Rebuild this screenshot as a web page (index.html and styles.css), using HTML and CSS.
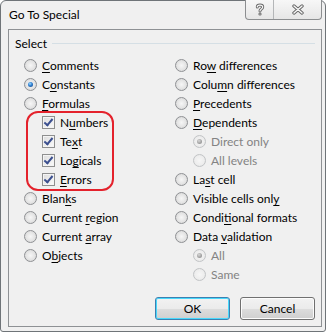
FILE: index.html
```html
<!DOCTYPE html>
<html lang="en">

<head>
  <meta charset="UTF-8">
  <title>Go To Special</title>
  <link rel="stylesheet" href="styles.css">
</head>

<body>
  <div class="window">
    <div class="titlebar">
      <span class="title">Go To Special</span>
      <div class="caption-buttons">
        <span class="cap-btn help">
          <svg width="10" height="13" viewBox="0 0 10 13">
            <path d="M2.3 4 C2.3 1.4 7.7 1.4 7.7 4 C7.7 6 5 6 5 8" fill="none" stroke="#6a6a6a" stroke-width="3" stroke-linecap="round"/>
            <circle cx="5" cy="11" r="1.6" fill="#6a6a6a"/>
            <path d="M2.3 4 C2.3 1.4 7.7 1.4 7.7 4 C7.7 6 5 6 5 8" fill="none" stroke="#f7f7f7" stroke-width="1.2" stroke-linecap="round"/>
            <circle cx="5" cy="11" r="0.6" fill="#f7f7f7"/>
          </svg>
        </span>
        <span class="cap-btn close">
          <svg width="14" height="11" viewBox="0 0 14 11">
            <path d="M3 2 L11 9 M11 2 L3 9" fill="none" stroke="#6a6a6a" stroke-width="3.4" stroke-linecap="round"/>
            <path d="M3 2 L11 9 M11 2 L3 9" fill="none" stroke="#f7f7f7" stroke-width="1.4" stroke-linecap="round"/>
          </svg>
        </span>
      </div>
    </div>

    <div class="panel">
      <div class="group-head">
        <span class="group-label">Select</span>
        <span class="rule"></span>
      </div>

      <div class="columns">
        <div class="col">
          <div class="opt"><span class="radio"></span><span><u>C</u>omments</span></div>
          <div class="opt"><span class="radio checked"></span><span>C<u>o</u>nstants</span></div>
          <div class="opt"><span class="radio"></span><span><u>F</u>ormulas</span></div>
          <div class="check-group">
            <div class="opt"><span class="checkbox"></span><span>N<u>u</u>mbers</span></div>
            <div class="opt"><span class="checkbox"></span><span>Te<u>x</u>t</span></div>
            <div class="opt"><span class="checkbox"></span><span>Lo<u>g</u>icals</span></div>
            <div class="opt"><span class="checkbox"></span><span><u>E</u>rrors</span></div>
          </div>
          <div class="opt"><span class="radio"></span><span>Blan<u>k</u>s</span></div>
          <div class="opt"><span class="radio"></span><span>Current <u>r</u>egion</span></div>
          <div class="opt"><span class="radio"></span><span>Current <u>a</u>rray</span></div>
          <div class="opt"><span class="radio"></span><span>O<u>b</u>jects</span></div>
        </div>

        <div class="col">
          <div class="opt"><span class="radio"></span><span>Ro<u>w</u> differences</span></div>
          <div class="opt"><span class="radio"></span><span>Colu<u>m</u>n differences</span></div>
          <div class="opt"><span class="radio"></span><span><u>P</u>recedents</span></div>
          <div class="opt"><span class="radio"></span><span><u>D</u>ependents</span></div>
          <div class="opt sub disabled"><span class="radio checked"></span><span>Direct only</span></div>
          <div class="opt sub disabled"><span class="radio"></span><span>All levels</span></div>
          <div class="opt"><span class="radio"></span><span>La<u>s</u>t cell</span></div>
          <div class="opt"><span class="radio"></span><span>Visible cells onl<u>y</u></span></div>
          <div class="opt"><span class="radio"></span><span>Condi<u>t</u>ional formats</span></div>
          <div class="opt"><span class="radio"></span><span>Data <u>v</u>alidation</span></div>
          <div class="opt sub disabled"><span class="radio checked"></span><span>All</span></div>
          <div class="opt sub disabled"><span class="radio"></span><span>Same</span></div>
        </div>
      </div>

      <div class="buttons">
        <button class="btn default">OK</button>
        <button class="btn">Cancel</button>
      </div>
    </div>
  </div>
</body>

</html>
```

FILE: styles.css
```css
body {
  margin: 0;
  background-color: #ffffff;
  font-family: 'Lato', 'Liberation Sans', sans-serif;
  font-size: 12px;
  color: #000;
}

.window {
  box-sizing: border-box;
  width: 326px;
  height: 332px;
  padding: 0 3px 4px 7px;
  border: 1px solid #6f7478;
  border-radius: 6px 6px 3px 3px;
  background-color: #f0f0f0;
  display: flex;
  flex-direction: column;
}

.titlebar {
  height: 28px;
  display: flex;
  justify-content: space-between;
  align-items: flex-start;
}

.title {
  padding-left: 1px;
  line-height: 28px;
  color: #000;
}

.caption-buttons {
  display: flex;
  margin-top: -1px;
  height: 19px;
  border: 1px solid #8c8e90;
  border-top: none;
  border-radius: 0 0 4px 4px;
  background: linear-gradient(#f7f7f7, #e6e6e6);
  overflow: hidden;
}

.cap-btn {
  display: flex;
  align-items: center;
  justify-content: center;
}

.cap-btn.help {
  width: 27px;
}

.cap-btn.close {
  width: 47px;
  border-left: 1px solid #b4b6b8;
}

.panel {
  flex: 1;
  display: flex;
  flex-direction: column;
  border: 1px solid #8e9194;
  background-color: #f0f0f0;
}

.group-head {
  display: flex;
  align-items: center;
  padding: 6px 6px 0 6px;
}

.group-label {
  line-height: 16px;
}

.rule {
  flex: 1;
  height: 1px;
  margin: -1px 0 0 5px;
  background-color: #d5dfe5;
}

.columns {
  display: grid;
  grid-template-columns: 151px 1fr;
  padding-left: 15px;
  margin-top: 4px;
}

.opt {
  display: flex;
  align-items: center;
  height: 19px;
  white-space: nowrap;
}

.opt u {
  text-decoration-thickness: 1px;
  text-underline-offset: 2px;
}

.opt.sub {
  padding-left: 18px;
}

.opt.disabled {
  color: #838383;
}

.radio {
  box-sizing: border-box;
  width: 13px;
  height: 13px;
  margin-right: 5px;
  border-radius: 50%;
  border: 1px solid #8f9194;
  background: radial-gradient(circle at 50% 50%, #f6f6f6 0, #e4e4e4 55%, #cfcfcf 100%);
  position: relative;
  flex-shrink: 0;
}

.radio.checked::after {
  content: "";
  position: absolute;
  left: 3px;
  top: 3px;
  width: 5px;
  height: 5px;
  border-radius: 50%;
  background: radial-gradient(circle at 40% 35%, #9ddcff 0, #2f7ed0 45%, #12427e 100%);
}

.disabled .radio {
  border-color: #c2c4c6;
  background: radial-gradient(circle at 50% 50%, #f6f6f6 0, #ededed 60%, #e0e0e0 100%);
}

.disabled .radio.checked::after {
  background: radial-gradient(circle at 40% 35%, #d8d8d8 0, #a0a0a0 60%, #8a8a8a 100%);
}

.check-group {
  box-sizing: border-box;
  width: 88px;
  margin: -2px 0 -2px 2px;
  padding-left: 14px;
  border: 2px solid #e4222c;
  border-radius: 12px;
}

.checkbox {
  box-sizing: border-box;
  width: 13px;
  height: 13px;
  margin-right: 5px;
  border: 1px solid #8e8f8f;
  background: linear-gradient(135deg, #dcdcdc, #fbfbfb);
  box-shadow: inset 0 0 0 1px #f4f4f4;
  flex-shrink: 0;
  position: relative;
}

.checkbox::after {
  content: "";
  position: absolute;
  left: 3px;
  top: 0px;
  width: 3px;
  height: 7px;
  border-right: 2px solid #3b4f8f;
  border-bottom: 2px solid #3b4f8f;
  transform: rotate(40deg);
}

.buttons {
  margin-top: auto;
  display: flex;
  justify-content: flex-end;
  gap: 10px;
  padding: 0 6px 6px 0;
}

.btn {
  width: 75px;
  height: 23px;
  border: 1px solid #707070;
  border-radius: 3px;
  background: linear-gradient(#f2f2f2 0%, #ebebeb 50%, #dddddd 51%, #cfcfcf 100%);
  box-shadow: inset 0 0 0 1px #fcfcfc;
  font-family: 'Lato', 'Liberation Sans', sans-serif;
  font-size: 12px;
  color: #000;
  padding: 0;
}

.btn.default {
  border-color: #3c7fb1;
  box-shadow: inset 0 0 0 1px #48d8fb;
}
```
